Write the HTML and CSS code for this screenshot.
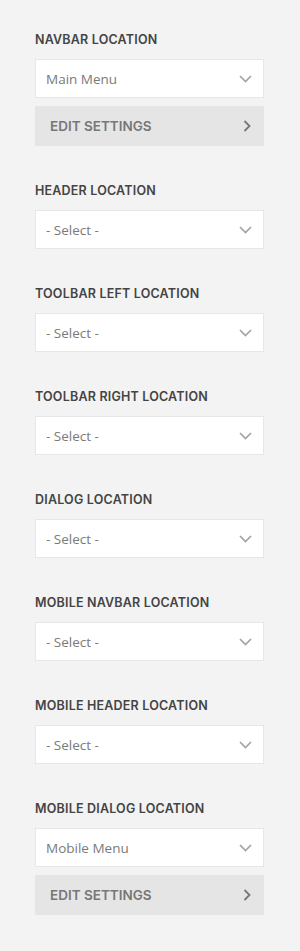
FILE: index.html
```html
<!DOCTYPE html>
<html>
<head>
<meta charset="utf-8">
<link rel="stylesheet" href="styles.css">
</head>
<body>
<div class="panel">
  <div class="field">
    <div class="label">Navbar Location</div>
    <div class="select"><span class="value">Main Menu</span><svg class="chev-down" width="13" height="8" viewBox="0 0 13 8"><path d="M1 1l5.5 5.5L12 1" fill="none" stroke="#a3a3a3" stroke-width="1.7"/></svg></div>
    <div class="button"><span>Edit Settings</span><svg class="chev-right" width="8" height="12" viewBox="0 0 8 12"><path d="M1.5 1l5 5-5 5" fill="none" stroke="#777" stroke-width="1.8"/></svg></div>
  </div>
  <div class="field">
    <div class="label">Header Location</div>
    <div class="select"><span class="value">- Select -</span><svg class="chev-down" width="13" height="8" viewBox="0 0 13 8"><path d="M1 1l5.5 5.5L12 1" fill="none" stroke="#a3a3a3" stroke-width="1.7"/></svg></div>
  </div>
  <div class="field">
    <div class="label">Toolbar Left Location</div>
    <div class="select"><span class="value">- Select -</span><svg class="chev-down" width="13" height="8" viewBox="0 0 13 8"><path d="M1 1l5.5 5.5L12 1" fill="none" stroke="#a3a3a3" stroke-width="1.7"/></svg></div>
  </div>
  <div class="field">
    <div class="label">Toolbar Right Location</div>
    <div class="select"><span class="value">- Select -</span><svg class="chev-down" width="13" height="8" viewBox="0 0 13 8"><path d="M1 1l5.5 5.5L12 1" fill="none" stroke="#a3a3a3" stroke-width="1.7"/></svg></div>
  </div>
  <div class="field">
    <div class="label">Dialog Location</div>
    <div class="select"><span class="value">- Select -</span><svg class="chev-down" width="13" height="8" viewBox="0 0 13 8"><path d="M1 1l5.5 5.5L12 1" fill="none" stroke="#a3a3a3" stroke-width="1.7"/></svg></div>
  </div>
  <div class="field">
    <div class="label">Mobile Navbar Location</div>
    <div class="select"><span class="value">- Select -</span><svg class="chev-down" width="13" height="8" viewBox="0 0 13 8"><path d="M1 1l5.5 5.5L12 1" fill="none" stroke="#a3a3a3" stroke-width="1.7"/></svg></div>
  </div>
  <div class="field">
    <div class="label">Mobile Header Location</div>
    <div class="select"><span class="value">- Select -</span><svg class="chev-down" width="13" height="8" viewBox="0 0 13 8"><path d="M1 1l5.5 5.5L12 1" fill="none" stroke="#a3a3a3" stroke-width="1.7"/></svg></div>
  </div>
  <div class="field">
    <div class="label">Mobile Dialog Location</div>
    <div class="select"><span class="value">Mobile Menu</span><svg class="chev-down" width="13" height="8" viewBox="0 0 13 8"><path d="M1 1l5.5 5.5L12 1" fill="none" stroke="#a3a3a3" stroke-width="1.7"/></svg></div>
    <div class="button"><span>Edit Settings</span><svg class="chev-right" width="8" height="12" viewBox="0 0 8 12"><path d="M1.5 1l5 5-5 5" fill="none" stroke="#777" stroke-width="1.8"/></svg></div>
  </div>
</div>
</body>
</html>
```
FILE: styles.css
```css
html, body {
  margin: 0;
  padding: 0;
  background: #f3f3f3;
}
body {
  font-family: "Open Sans", "Liberation Sans", sans-serif;
}
.panel {
  width: 229px;
  padding: 31px 0 0 35px;
  display: flex;
  flex-direction: column;
  gap: 36px;
}
.field {
  display: flex;
  flex-direction: column;
}
.label {
  font-family: Inter, "Liberation Sans", sans-serif;
  font-weight: 600;
  font-size: 12.5px;
  line-height: 18px;
  letter-spacing: 0.2px;
  color: #444;
  text-transform: uppercase;
  margin-bottom: 10px;
}
.select {
  box-sizing: border-box;
  height: 39px;
  background: #fff;
  border: 1px solid #e7e7e7;
  display: flex;
  align-items: center;
  justify-content: space-between;
  padding: 0 11px 0 10px;
}
.value {
  font-size: 13.5px;
  color: #7a7a7a;
}
.chev-down {
  display: block;
  margin-top: 1px;
}
.button {
  box-sizing: border-box;
  height: 40px;
  margin-top: 8px;
  background: #e5e5e5;
  display: flex;
  align-items: center;
  justify-content: space-between;
  padding: 0 13px 0 15px;
  font-family: Inter, "Liberation Sans", sans-serif;
  font-weight: 600;
  font-size: 13.5px;
  color: #777;
  text-transform: uppercase;
}
.chev-right {
  display: block;
}
```
